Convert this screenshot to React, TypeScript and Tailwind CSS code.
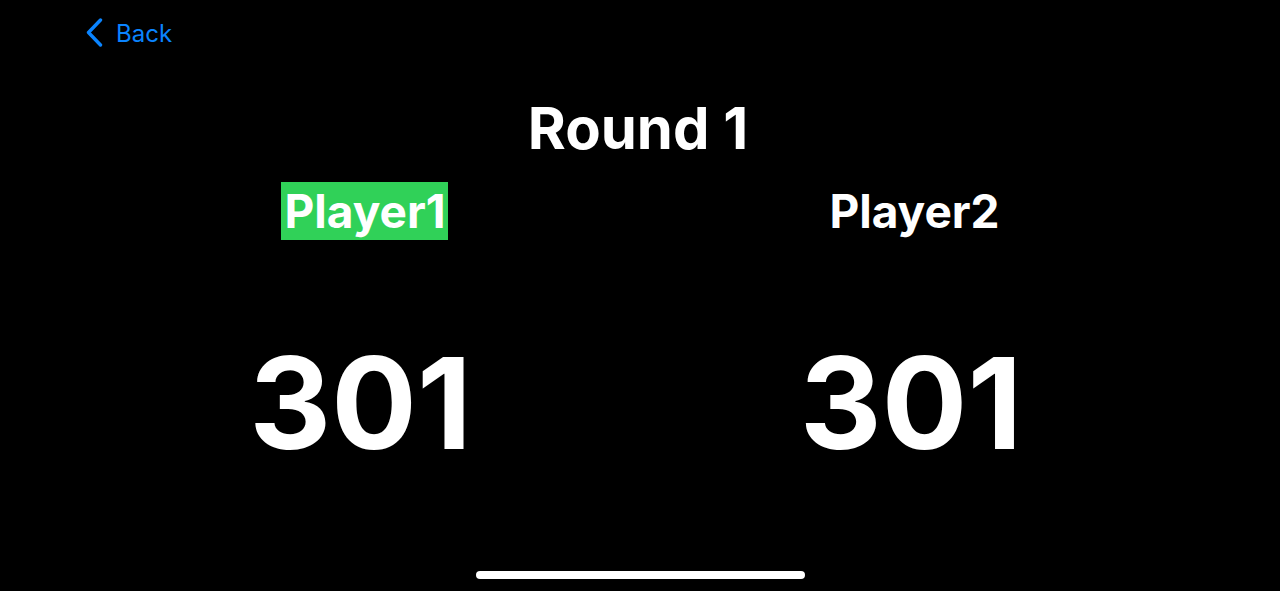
import React from "react";

export default function App() {
  return (
    <div
      className="w-[1280px] h-[591px] bg-black flex flex-col text-white overflow-hidden"
      style={{ fontFamily: "Inter, 'Noto Sans', sans-serif" }}
    >
      <div className="flex items-start pt-[18px] pl-[85px]">
        <svg width="18" height="29" viewBox="0 0 18 29" fill="none">
          <path
            d="M15.5 2 L3.5 14.5 L15.5 27"
            stroke="#0a84ff"
            strokeWidth="3.4"
            strokeLinecap="round"
            strokeLinejoin="round"
          />
        </svg>
        <span className="ml-[13px] mt-[2px] text-[24px] leading-[28px] text-[#0a84ff]">Back</span>
      </div>

      <div className="mt-[51px] text-center text-[58px] leading-[58px] font-bold -ml-[4px]">Round 1</div>

      <div className="mt-[25px] flex justify-center gap-[109px]">
        <div className="w-[440px] flex flex-col items-center">
          <span className="bg-[#30d158] text-[46px] leading-[58px] font-bold pl-[3px] pr-[2px] -ml-[2px]">Player1</span>
          <span className="mt-[100px] text-[127px] leading-[127px] font-bold -ml-[10px]">301</span>
        </div>
        <div className="w-[440px] flex flex-col items-center">
          <span className="text-[46px] leading-[58px] font-bold px-[1px]">Player2</span>
          <span className="mt-[100px] text-[127px] leading-[127px] font-bold -ml-[7px]">301</span>
        </div>
      </div>

      <div className="mt-auto pb-[12px] flex justify-center">
        <div className="w-[329px] h-[8px] rounded-full bg-white" />
      </div>
    </div>
  );
}
